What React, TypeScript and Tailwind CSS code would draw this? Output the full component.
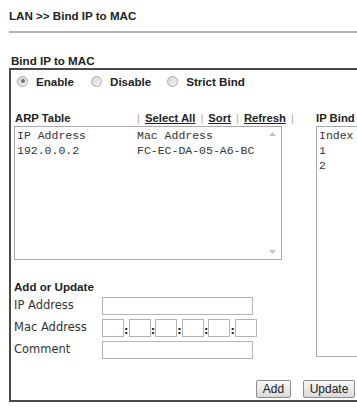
import React from "react";

const sans = "font-['Liberation_Sans',Arial,sans-serif]";
const mono = "font-['Liberation_Mono','Courier_New',monospace]";
const dejavu = "font-['DejaVu_Sans',Verdana,sans-serif]";

function Radio({ checked }: { checked?: boolean }) {
  return (
    <span className="flex items-center justify-center w-[11px] h-[11px] rounded-full border border-[#a8a8a8] bg-linear-to-br from-[#d4d4d4] to-[#f6f6f6] shrink-0">
      {checked && <span className="w-[4px] h-[4px] rounded-full bg-[#6e6e6e]" />}
    </span>
  );
}

function Pipe() {
  return <span className="text-[#d8a08c] font-normal">|</span>;
}

function Box({ w }: { w: string }) {
  return <div className={`${w} h-[18px] border border-[#b4b4b4] bg-white shrink-0`} />;
}

function Colon() {
  return (
    <span className="w-[4.6px] text-center font-bold text-[11px] leading-none mt-[4px] text-[#222] shrink-0">:</span>
  );
}

export default function App() {
  return (
    <div className="w-[357px] h-[407px] overflow-hidden bg-white">
      <div className={`w-[600px] pl-[9px] ${sans} text-[#222]`}>
        <div className="pt-[9px] pb-[8px] border-b-2 border-[#b4b4b4] text-[11.6px] font-bold leading-[14px]">
          LAN &gt;&gt; Bind IP to MAC
        </div>
        <div className="mt-[21px] pl-[2px] text-[11.6px] font-bold leading-[14px]">Bind IP to MAC</div>
        <div className="border-2 border-[#4a4a4a] flex flex-col">
          {/* radio row */}
          <div className="mt-[1px] h-[21px] flex items-center pl-[6px] text-[11.6px] font-bold">
            <div className="flex items-center">
              <Radio checked />
              <span className="ml-[8px]">Enable</span>
            </div>
            <div className="flex items-center ml-[17px]">
              <Radio />
              <span className="ml-[8px]">Disable</span>
            </div>
            <div className="flex items-center ml-[16px]">
              <Radio />
              <span className="ml-[8px]">Strict Bind</span>
            </div>
          </div>

          {/* columns */}
          <div className="mt-[19px] pl-[3px] flex">
            <div className="w-[302px] flex flex-col">
              <div className="h-[14px] leading-[14px] flex text-[11.3px] font-bold">
                <span className="w-[123px] pl-[1px]">ARP Table</span>
                <div className="flex gap-[5px]">
                  <Pipe />
                  <span className="underline">Select All</span>
                  <Pipe />
                  <span className="underline">Sort</span>
                  <Pipe />
                  <span className="underline">Refresh</span>
                  <Pipe />
                </div>
              </div>
              <div className="mt-[1px] w-[268px] h-[134px] border border-[#a9a9a9] flex">
                <div className={`flex-1 pl-[2px] pt-[1px] ${mono} text-[11.5px] leading-[15px] text-[#333]`}>
                  <div className="flex">
                    <span className="w-[120px]">IP Address</span>
                    <span>Mac Address</span>
                  </div>
                  <div className="flex">
                    <span className="w-[120px]">192.0.0.2</span>
                    <span>FC-EC-DA-05-A6-BC</span>
                  </div>
                </div>
                <div className="w-[17px] flex flex-col justify-between items-center">
                  <div className="h-[13px] flex items-center justify-center">
                    <svg width="7" height="4" viewBox="0 0 7 4">
                      <polygon points="3.5,0 7,4 0,4" fill="#c4c4c4" />
                    </svg>
                  </div>
                  <div className="h-[15px] flex items-center justify-center">
                    <svg width="7" height="4" viewBox="0 0 7 4">
                      <polygon points="0,0 7,0 3.5,4" fill="#c4c4c4" />
                    </svg>
                  </div>
                </div>
              </div>

              <div className="mt-[20px] text-[11.6px] font-bold leading-[14px]">Add or Update</div>
              <div className={`mt-[1px] flex flex-col ${dejavu} text-[11.5px] text-[#333]`}>
                <div className="h-[22px] flex items-center">
                  <span className="w-[88px]">IP Address</span>
                  <Box w="w-[151px]" />
                </div>
                <div className="h-[22px] flex items-center">
                  <span className="w-[88px]">Mac Address</span>
                  <div className="flex items-center">
                    <Box w="w-[22px]" />
                    <Colon />
                    <Box w="w-[22px]" />
                    <Colon />
                    <Box w="w-[22px]" />
                    <Colon />
                    <Box w="w-[22px]" />
                    <Colon />
                    <Box w="w-[22px]" />
                    <Colon />
                    <Box w="w-[22px]" />
                  </div>
                </div>
                <div className="h-[22px] flex items-center">
                  <span className="w-[88px]">Comment</span>
                  <Box w="w-[151px]" />
                </div>
              </div>
            </div>

            <div className="flex flex-col">
              <div className="h-[14px] leading-[14px] text-[11.3px] font-bold">IP Bind</div>
              <div className={`mt-[1px] w-[220px] h-[231px] border border-[#a9a9a9] pl-[2px] pt-[1px] ${mono} text-[11.5px] leading-[15px] text-[#333]`}>
                <div>Index</div>
                <div>1</div>
                <div>2</div>
              </div>
            </div>
          </div>

          {/* buttons */}
          <div className="mt-[19px] pb-[2px] pl-[245px] flex gap-[12px]">
            <button className="w-[35px] h-[18px] border border-[#8c8c8c] rounded-[2px] bg-linear-to-b from-[#f8f8f8] to-[#dadada] text-[12px] leading-none text-[#222]">
              Add
            </button>
            <button className="w-[52px] h-[18px] border border-[#8c8c8c] rounded-[2px] bg-linear-to-b from-[#f8f8f8] to-[#dadada] text-[12px] leading-none text-[#222]">
              Update
            </button>
          </div>
        </div>
      </div>
    </div>
  );
}
